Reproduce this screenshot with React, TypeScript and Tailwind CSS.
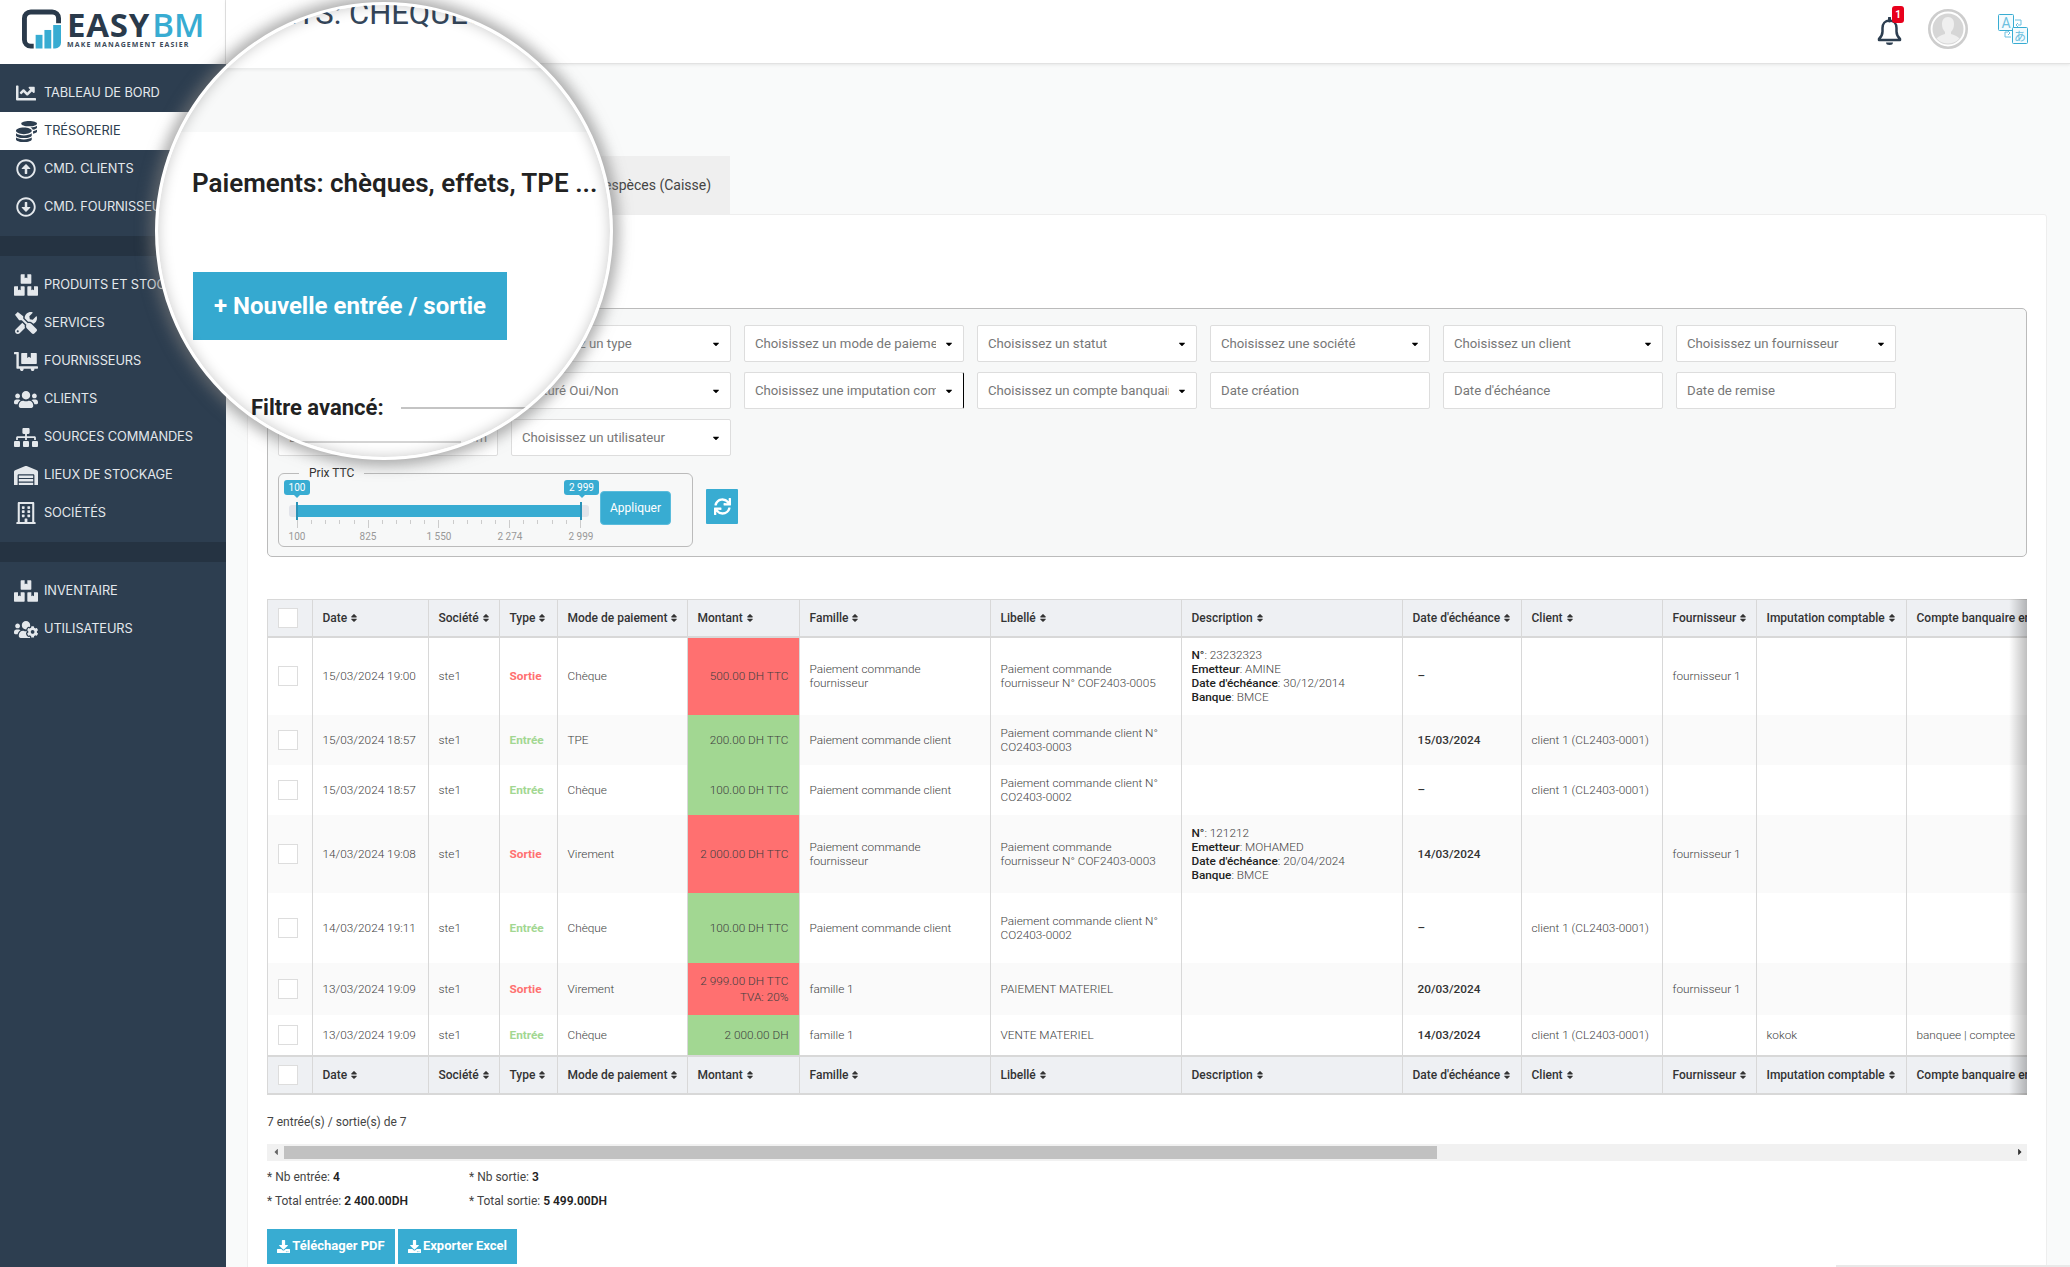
import {
  FaBoxes,
  FaCaretDown,
  FaCaretLeft,
  FaCaretRight,
  FaChartLine,
  FaCoins,
  FaDollyFlatbed,
  FaDownload,
  FaRegArrowAltCircleDown,
  FaRegArrowAltCircleUp,
  FaRegBuilding,
  FaSitemap,
  FaSort,
  FaSync,
  FaTools,
  FaUsers,
  FaUsersCog,
  FaWarehouse,
} from 'react-icons/fa'

function Logo() {
  return (
    <div className="flex items-start gap-[6px] pl-[22px] pt-[9px]">
      <svg width="39" height="40" viewBox="0 0 40 40">
        <path d="M12 37.5H9a6.5 6.5 0 0 1-6.5-6.5V9A6.5 6.5 0 0 1 9 2.5h22A6.5 6.5 0 0 1 37.5 9v5" fill="none" stroke="#2a3a4b" strokeWidth="5" />
        <rect x="14" y="26" width="7" height="14" fill="#38acd2" />
        <rect x="23" y="21" width="7" height="19" fill="#38acd2" />
        <path d="M32 16h8v18a6 6 0 0 1-6 6h-2z" fill="#38acd2" />
      </svg>
      <div className="flex flex-col pt-[3px]">
        <div className="font-['Open_Sans',sans-serif] text-[33px] leading-[26px] font-bold tracking-[0.8px] text-[#2a3a4b]">
          EASY<span className="ml-[2px] font-semibold tracking-[0px] text-[#38acd2]">BM</span>
        </div>
        <div className="mt-[3px] font-['Open_Sans',sans-serif] text-[7px] leading-[8px] font-bold tracking-[1.1px] whitespace-nowrap text-[#3c4b5a]">
          MAKE MANAGEMENT EASIER
        </div>
      </div>
    </div>
  )
}

function NavItem({ icon, label, active }: { icon: React.ReactNode; label: string; active?: boolean }) {
  return (
    <div className={active ? 'flex h-[38px] items-center bg-white text-[#2d3e50]' : 'flex h-[38px] items-center text-[#e4e8ec]'}>
      <div className="flex w-[44px] pl-[14px]">
        <div className="flex w-[24px] justify-center">{icon}</div>
      </div>
      <span className="font-['Inter',sans-serif] text-[12.8px] tracking-[-0.1px] whitespace-nowrap">{label}</span>
    </div>
  )
}

function Sidebar() {
  return (
    <aside className="flex w-[226px] shrink-0 flex-col">
      <div className="h-[64px] border-r border-[#e3e3e3] bg-white">
        <Logo />
      </div>
      <nav className="flex flex-1 flex-col bg-[#2d3e50]">
        <div className="py-[10px]">
          <NavItem icon={<FaChartLine size={20} />} label="TABLEAU DE BORD" />
          <NavItem icon={<FaCoins size={21} />} label="TRÉSORERIE" active />
          <NavItem icon={<FaRegArrowAltCircleUp size={20} />} label="CMD. CLIENTS" />
          <NavItem icon={<FaRegArrowAltCircleDown size={20} />} label="CMD. FOURNISSEURS" />
        </div>
        <div className="h-[20px] bg-[#253342]" />
        <div className="py-[10px]">
          <NavItem icon={<FaBoxes size={24} />} label="PRODUITS ET STOCK" />
          <NavItem icon={<FaTools size={22} />} label="SERVICES" />
          <NavItem icon={<FaDollyFlatbed size={25} />} label="FOURNISSEURS" />
          <NavItem icon={<FaUsers size={25} />} label="CLIENTS" />
          <NavItem icon={<FaSitemap size={25} />} label="SOURCES COMMANDES" />
          <NavItem icon={<FaWarehouse size={25} />} label="LIEUX DE STOCKAGE" />
          <NavItem icon={<FaRegBuilding size={22} />} label="SOCIÉTÉS" />
        </div>
        <div className="h-[20px] bg-[#253342]" />
        <div className="py-[10px]">
          <NavItem icon={<FaBoxes size={24} />} label="INVENTAIRE" />
          <NavItem icon={<FaUsersCog size={25} />} label="UTILISATEURS" />
        </div>
      </nav>
    </aside>
  )
}

function Header() {
  return (
    <header className="flex h-[64px] shrink-0 items-start justify-end border-b border-[#e2e2e2] bg-white pr-[42px] shadow-[0_1px_3px_rgba(0,0,0,0.08)]">
      <div className="relative mt-[17px] mr-[26px]">
        <svg width="25" height="28" viewBox="0 0 25 28" className="text-[#2d3e50]">
          <path d="M12.5 1v3" stroke="currentColor" strokeWidth="3" strokeLinecap="round" />
          <path d="M12.5 3.5c-4.5 0-7 3.5-7 7.5v3.5c0 3-1.500 5.500-3.500 7.500v1h21v-1c-2-2-3.500-4.500-3.500-7.500V11c0-4-2.500-7.500-7-7.500z" fill="none" stroke="currentColor" strokeWidth="2.500" strokeLinejoin="round" />
          <path d="M9 25.500h7a3.500 2.500 0 0 1-7 0z" fill="currentColor" />
        </svg>
        <span className="absolute -top-[11px] right-[-2px] flex h-[17px] w-[12px] items-center justify-center rounded-[3px] bg-[#e8001c] text-[10px] font-bold text-white">
          1
        </span>
      </div>
      <svg width="40" height="40" viewBox="0 0 40 40" className="mt-[9px] mr-[30px]">
        <circle cx="20" cy="20" r="18.700" fill="#fff" stroke="#cdcdcd" strokeWidth="2.600" />
        <circle cx="20" cy="20" r="15.500" fill="#d6d6d6" />
        <path d="M20 8c4 0 6 3 6 7 0 3-1 6-3 8v2c3 1 6.500 2 8.500 4.500a15.500 15.500 0 0 1-23 0c2-2.500 5.500-3.500 8.500-4.500v-2c-2-2-3-5-3-8 0-4 2-7 6-7z" fill="#efefef" />
      </svg>
      <svg width="30" height="30" viewBox="0 0 30 30" className="mt-[14px]">
        <rect x="0.500" y="0.500" width="15" height="16" rx="1" fill="#f4fbfe" stroke="#38acd2" />
        <rect x="14.500" y="13.500" width="15" height="16" rx="1" fill="#f4fbfe" stroke="#38acd2" />
        <text x="8" y="14" textAnchor="middle" fontSize="14" fontFamily="Roboto" fill="#6cc0e0">A</text>
        <text x="22" y="26.500" textAnchor="middle" fontSize="12" fontFamily="'Noto Sans CJK JP'" fill="#6cc0e0">あ</text>
        <path d="M17 6h6v5h-3M20 9l-2 2 2 2M13 23H7v-5h3M10 21l2-2-2-2" fill="none" stroke="#6cc0e0" />
      </svg>
    </header>
  )
}

function Select({ label, active }: { label: string; active?: boolean }) {
  return (
    <div className={active
      ? 'flex h-[37px] items-center rounded-[2px] border border-[#ddd] border-r-black bg-white pr-[9px] pl-[10px] text-[13.200px] text-[#777]'
      : 'flex h-[37px] items-center rounded-[2px] border border-[#ddd] bg-white pr-[9px] pl-[10px] text-[13.200px] text-[#777]'}>
      <span className="min-w-0 flex-1 overflow-hidden whitespace-nowrap">{label}</span>
      <FaCaretDown size={10} className="ml-[8px] shrink-0 text-black" />
    </div>
  )
}

function DateInput({ label }: { label: string }) {
  return (
    <div className="flex h-[37px] items-center rounded-[2px] border border-[#ddd] bg-white px-[10px] text-[13.200px] whitespace-nowrap text-[#777]">
      {label}
    </div>
  )
}

const ticks = Array.from({ length: 21 }, (_, i) => i)

function PriceFilter() {
  return (
    <div className="relative flex h-[74px] w-[415px] rounded-[6px] border border-[#bbb] pl-[10px]">
      <span className="absolute -top-[8px] left-[20px] bg-[#f7f8f8] px-[10px] text-[12px] leading-[14px] text-[#333]">Prix TTC</span>
      <div className="relative h-full w-[300px] text-[10px]">
        <div className="absolute top-[6px] left-[-5px] flex h-[15px] w-[26px] items-center justify-center rounded-[3px] bg-[#38acd2] text-white">
          100
          <i className="absolute -bottom-[2px] left-1/2 h-[5px] w-[5px] -translate-x-1/2 rotate-45 bg-[#38acd2]" />
        </div>
        <div className="absolute top-[6px] left-[275px] flex h-[15px] w-[35px] items-center justify-center rounded-[3px] bg-[#38acd2] text-white">
          2 999
          <i className="absolute -bottom-[2px] left-1/2 h-[5px] w-[5px] -translate-x-1/2 rotate-45 bg-[#38acd2]" />
        </div>
        <div className="absolute top-[31px] h-[12px] w-full rounded-[3px] bg-[#e2e4ea]" />
        <div className="absolute top-[31px] left-[7px] h-[12px] w-[285px] bg-[#38acd2]" />
        <div className="absolute top-[28px] left-[7px] h-[18px] w-[2px] bg-[#2a93b8]" />
        <div className="absolute top-[28px] left-[291px] h-[18px] w-[2px] bg-[#2a93b8]" />
        <div className="absolute top-[46px] left-[8px] flex w-[284px] justify-between">
          {ticks.map((i) => (
            <i key={i} className={i % 5 === 0 ? 'h-[8px] w-px bg-[#ccc]' : 'h-[4px] w-px bg-[#ccc]'} />
          ))}
        </div>
        <div className="absolute top-[55px] left-[8px] flex w-[284px] justify-between text-[#999]">
          {['100', '825', '1 550', '2 274', '2 999'].map((t) => (
            <span key={t} className="flex w-0 justify-center whitespace-nowrap">{t}</span>
          ))}
        </div>
      </div>
      <button className="mt-[17px] ml-[11px] h-[34px] w-[71px] rounded-[4px] border border-[#5bbcdc] bg-[#38acd2] text-[12px] text-white">
        Appliquer
      </button>
    </div>
  )
}

function FilterPanel() {
  return (
    <div className="h-[249px] rounded-[5px] border border-[#bbb] bg-[#f7f8f8] pt-[16px] pl-[10px]">
      <div className="grid grid-cols-[repeat(7,220px)] gap-x-[13px] gap-y-[10px]">
        <Select label="Choisissez une famille" />
        <Select label="Choisissez un type" />
        <Select label="Choisissez un mode de paiement" />
        <Select label="Choisissez un statut" />
        <Select label="Choisissez une société" />
        <Select label="Choisissez un client" />
        <Select label="Choisissez un fournisseur" />
        <Select label="Choisissez une catégorie" />
        <Select label="Facturé Oui/Non" />
        <Select label="Choisissez une imputation comptable" active />
        <Select label="Choisissez un compte banquaire" />
        <DateInput label="Date création" />
        <DateInput label="Date d'échéance" />
        <DateInput label="Date de remise" />
        <div className="flex h-[37px] items-center justify-between rounded-[2px] border border-[#ddd] bg-white px-[10px] text-[13.200px] text-[#777]">
          <span>D</span>
          <span>em</span>
        </div>
        <Select label="Choisissez un utilisateur" />
      </div>
      <div className="mt-[17px] flex items-start">
        <PriceFilter />
        <button className="mt-[16px] ml-[13px] flex h-[35px] w-[32px] items-center justify-center rounded-[1px] bg-[#38acd2] text-white">
          <FaSync size={17} />
        </button>
      </div>
    </div>
  )
}

const columns = ['Date', 'Société', 'Type', 'Mode de paiement', 'Montant', 'Famille', 'Libellé', 'Description', "Date d'échéance", 'Client', 'Fournisseur', 'Imputation comptable', 'Compte banquaire en']

type Row = {
  height: string
  date: string
  type: 'Sortie' | 'Entrée'
  mode: string
  amount: string
  tva?: string
  family: string
  label: string
  desc?: [string, string, string, string]
  due: string
  client?: string
  supplier?: string
  imputation?: string
  account?: string
}

const client = 'client 1 (CL2403-0001)'
const rows: Row[] = [
  { height: 'h-[78px]', date: '15/03/2024 19:00', type: 'Sortie', mode: 'Chèque', amount: '500.00 DH TTC', family: 'Paiement commande fournisseur', label: 'Paiement commande fournisseur N° COF2403-0005', desc: ['23232323', 'AMINE', '30/12/2014', 'BMCE'], due: '–', supplier: 'fournisseur 1' },
  { height: 'h-[50px]', date: '15/03/2024 18:57', type: 'Entrée', mode: 'TPE', amount: '200.00 DH TTC', family: 'Paiement commande client', label: 'Paiement commande client N° CO2403-0003', due: '15/03/2024', client },
  { height: 'h-[50px]', date: '15/03/2024 18:57', type: 'Entrée', mode: 'Chèque', amount: '100.00 DH TTC', family: 'Paiement commande client', label: 'Paiement commande client N° CO2403-0002', due: '–', client },
  { height: 'h-[78px]', date: '14/03/2024 19:08', type: 'Sortie', mode: 'Virement', amount: '2 000.00 DH TTC', family: 'Paiement commande fournisseur', label: 'Paiement commande fournisseur N° COF2403-0003', desc: ['121212', 'MOHAMED', '20/04/2024', 'BMCE'], due: '14/03/2024', supplier: 'fournisseur 1' },
  { height: 'h-[70px]', date: '14/03/2024 19:11', type: 'Entrée', mode: 'Chèque', amount: '100.00 DH TTC', family: 'Paiement commande client', label: 'Paiement commande client N° CO2403-0002', due: '–', client },
  { height: 'h-[52px]', date: '13/03/2024 19:09', type: 'Sortie', mode: 'Virement', amount: '2 999.00 DH TTC', tva: 'TVA: 20%', family: 'famille 1', label: 'PAIEMENT MATERIEL', due: '20/03/2024', supplier: 'fournisseur 1' },
  { height: 'h-[41px]', date: '13/03/2024 19:09', type: 'Entrée', mode: 'Chèque', amount: '2 000.00 DH', family: 'famille 1', label: 'VENTE MATERIEL', due: '14/03/2024', client, imputation: 'kokok', account: 'banquee | comptee' },
]

const cell = 'border-r border-[#d8d8d8] px-[10px] align-middle'

function Box() {
  return <div className="ml-[10px] h-[20px] w-[20px] border border-[#ddd] bg-white" />
}

function HeadRow({ height }: { height: string }) {
  return (
    <tr className={`${height} bg-[#eef0f3]`}>
      <th className="border-r border-[#d8d8d8]"><Box /></th>
      {columns.map((c) => (
        <th key={c} className="border-r border-[#d8d8d8] px-[10px] text-left text-[12px] font-medium whitespace-nowrap text-[#333]">
          <span className="inline-flex items-center gap-[2px]">{c}<FaSort size={10} /></span>
        </th>
      ))}
    </tr>
  )
}

function DataRow({ row, striped }: { row: Row; striped: boolean }) {
  const out = row.type === 'Sortie'
  return (
    <tr className={striped ? `${row.height} bg-[#fafafa]` : `${row.height} bg-white`}>
      <td className="border-r border-[#d8d8d8]"><Box /></td>
      <td className={`${cell} whitespace-nowrap`}>{row.date}</td>
      <td className={cell}>ste1</td>
      <td className={out ? `${cell} font-bold text-[#ff7070]` : `${cell} font-bold text-[#a2d792]`}>{row.type}</td>
      <td className={cell}>{row.mode}</td>
      <td className={out ? `${cell} bg-[#ff7070] text-right whitespace-nowrap` : `${cell} bg-[#a2d792] text-right whitespace-nowrap`}>
        {row.amount}
        {row.tva && <div className="mt-[2px]">{row.tva}</div>}
      </td>
      <td className={cell}>{row.family}</td>
      <td className={cell}>{row.label}</td>
      <td className={cell}>
        {row.desc && (
          <div className="whitespace-nowrap">
            <div><b className="font-medium text-[#222]">N°</b>: {row.desc[0]}</div>
            <div><b className="font-medium text-[#222]">Emetteur</b>: {row.desc[1]}</div>
            <div><b className="font-medium text-[#222]">Date d'échéance</b>: {row.desc[2]}</div>
            <div><b className="font-medium text-[#222]">Banque</b>: {row.desc[3]}</div>
          </div>
        )}
      </td>
      <td className="border-r border-[#d8d8d8] pl-[15px] font-medium text-[#333]">{row.due}</td>
      <td className={`${cell} whitespace-nowrap`}>{row.client}</td>
      <td className={`${cell} whitespace-nowrap`}>{row.supplier}</td>
      <td className={cell}>{row.imputation}</td>
      <td className={`${cell} whitespace-nowrap`}>{row.account}</td>
    </tr>
  )
}

function PaymentsTable() {
  return (
    <div className="relative mt-[42px] overflow-hidden border-l border-[#d8d8d8]">
      <table className="w-[1838px] table-fixed border-collapse text-[11.800px] leading-[14px] font-light text-[#3f3f3f]">
        <colgroup>
          <col className="w-[44px]" />
          <col className="w-[116px]" />
          <col className="w-[71px]" />
          <col className="w-[58px]" />
          <col className="w-[130px]" />
          <col className="w-[112px]" />
          <col className="w-[191px]" />
          <col className="w-[191px]" />
          <col className="w-[221px]" />
          <col className="w-[119px]" />
          <col className="w-[141px]" />
          <col className="w-[94px]" />
          <col className="w-[150px]" />
          <col className="w-[220px]" />
        </colgroup>
        <thead className="border-t border-b-2 border-[#d8d8d8]"><HeadRow height="h-[37px]" /></thead>
        <tbody>
          {rows.map((row, i) => <DataRow key={i} row={row} striped={i % 2 === 1} />)}
        </tbody>
        <tfoot className="border-t-2 border-b-2 border-[#d8d8d8]"><HeadRow height="h-[38px]" /></tfoot>
      </table>
      <div className="absolute top-0 right-0 bottom-0 w-[18px] bg-gradient-to-r from-transparent to-black/25" />
    </div>
  )
}

function Card() {
  return (
    <div className="h-[1100px] rounded-t-[3px] border border-[#eee] bg-white px-[19px] pt-[93px]">
      <FilterPanel />
      <PaymentsTable />
      <p className="mt-[20px] text-[12px] leading-[14px] text-[#444]">7 entrée(s) / sortie(s) de 7</p>
      <div className="mt-[15px] flex h-[17px] items-center bg-[#f1f1f1] text-[#666]">
        <FaCaretLeft size={10} className="mr-[3px] ml-[4px] shrink-0" />
        <div className="h-[13px] w-[1153px] bg-[#c1c1c1]" />
        <div className="flex-1" />
        <FaCaretRight size={10} className="mx-[2px] shrink-0 text-[#333]" />
      </div>
      <div className="mt-[9px] grid w-[360px] grid-cols-[202px_1fr] gap-y-[10px] text-[12px] leading-[14px] text-[#444]">
        <div>* Nb entrée: <b className="font-semibold text-[#222]">4</b></div>
        <div>* Nb sortie: <b className="font-semibold text-[#222]">3</b></div>
        <div>* Total entrée: <b className="font-semibold text-[#222]">2 400.00DH</b></div>
        <div>* Total sortie: <b className="font-semibold text-[#222]">5 499.00DH</b></div>
      </div>
      <div className="mt-[21px] flex gap-[3px]">
        <button className="flex h-[35px] w-[128px] items-center justify-center gap-[2px] bg-[#38acd2] text-[13px] font-bold text-white">
          <FaDownload size={13} /> Téléchager PDF
        </button>
        <button className="flex h-[35px] w-[119px] items-center justify-center gap-[2px] bg-[#38acd2] text-[13px] font-bold text-white">
          <FaDownload size={13} /> Exporter Excel
        </button>
      </div>
    </div>
  )
}

// loupe over the top-left of the page, zooms on the tab title and the add button
function Lens() {
  return (
    <div className="absolute top-[2px] left-[155px] h-[458px] w-[458px] overflow-hidden rounded-full border-[3px] border-white bg-white shadow-[0_0_14px_6px_rgba(120,120,120,0.6)]">
      <div className="h-[63px] overflow-hidden bg-white pl-[9px] text-[31px] leading-[18px] whitespace-nowrap text-[#34465a]">
        PAIEMENTS: CHÈQUES, EFFETS
      </div>
      <div className="h-[64px] bg-[#f8f9f9] shadow-[inset_0_2px_3px_rgba(0,0,0,0.06)]" />
      <div className="pl-[34px]">
        <h2 className="pt-[33px] text-[26px] leading-[36px] font-semibold whitespace-nowrap text-[#222]">Paiements: chèques, effets, TPE ...</h2>
        <button className="mt-[71px] ml-[1px] h-[68px] w-[314px] bg-[#35a9d0] text-[24px] font-bold text-white">+ Nouvelle entrée / sortie</button>
        <div className="mt-[55px] ml-[59px] flex items-center">
          <span className="text-[22px] leading-[26px] font-bold text-[#222]">Filtre avancé:</span>
          <span className="ml-[17px] h-[2px] flex-1 bg-[#c4c4c4]" />
        </div>
        <div className="mt-[20px] ml-[102px] h-[2px] w-[167px] bg-[#d4d4d4]" />
      </div>
      <div className="pointer-events-none absolute inset-0 rounded-full shadow-[inset_0_0_14px_rgba(0,0,0,0.22)]" />
    </div>
  )
}

export default function App() {
  return (
    <div className="relative flex h-[1267px] w-[2070px] overflow-hidden bg-[#f9fafa] font-[Roboto,sans-serif]">
      <Sidebar />
      <div className="flex min-w-0 flex-1 flex-col">
        <Header />
        <main className="pt-[92px] pr-[23px] pl-[21px]">
          <div className="flex h-[58px]">
            <div className="flex w-[342px] items-center bg-white pl-[14px] text-[14px] whitespace-nowrap text-[#333]">
              Paiements: chèques, effets, TPE ...
            </div>
            <div className="flex w-[141px] items-center bg-[#efefef] pl-[15px] text-[14px] whitespace-nowrap text-[#444]">
              espèces (Caisse)
            </div>
          </div>
          <Card />
        </main>
      </div>
      <Lens />
      <div className="absolute right-0 bottom-0 h-[2px] w-[234px] bg-[#e9e9e9]" />
    </div>
  )
}
